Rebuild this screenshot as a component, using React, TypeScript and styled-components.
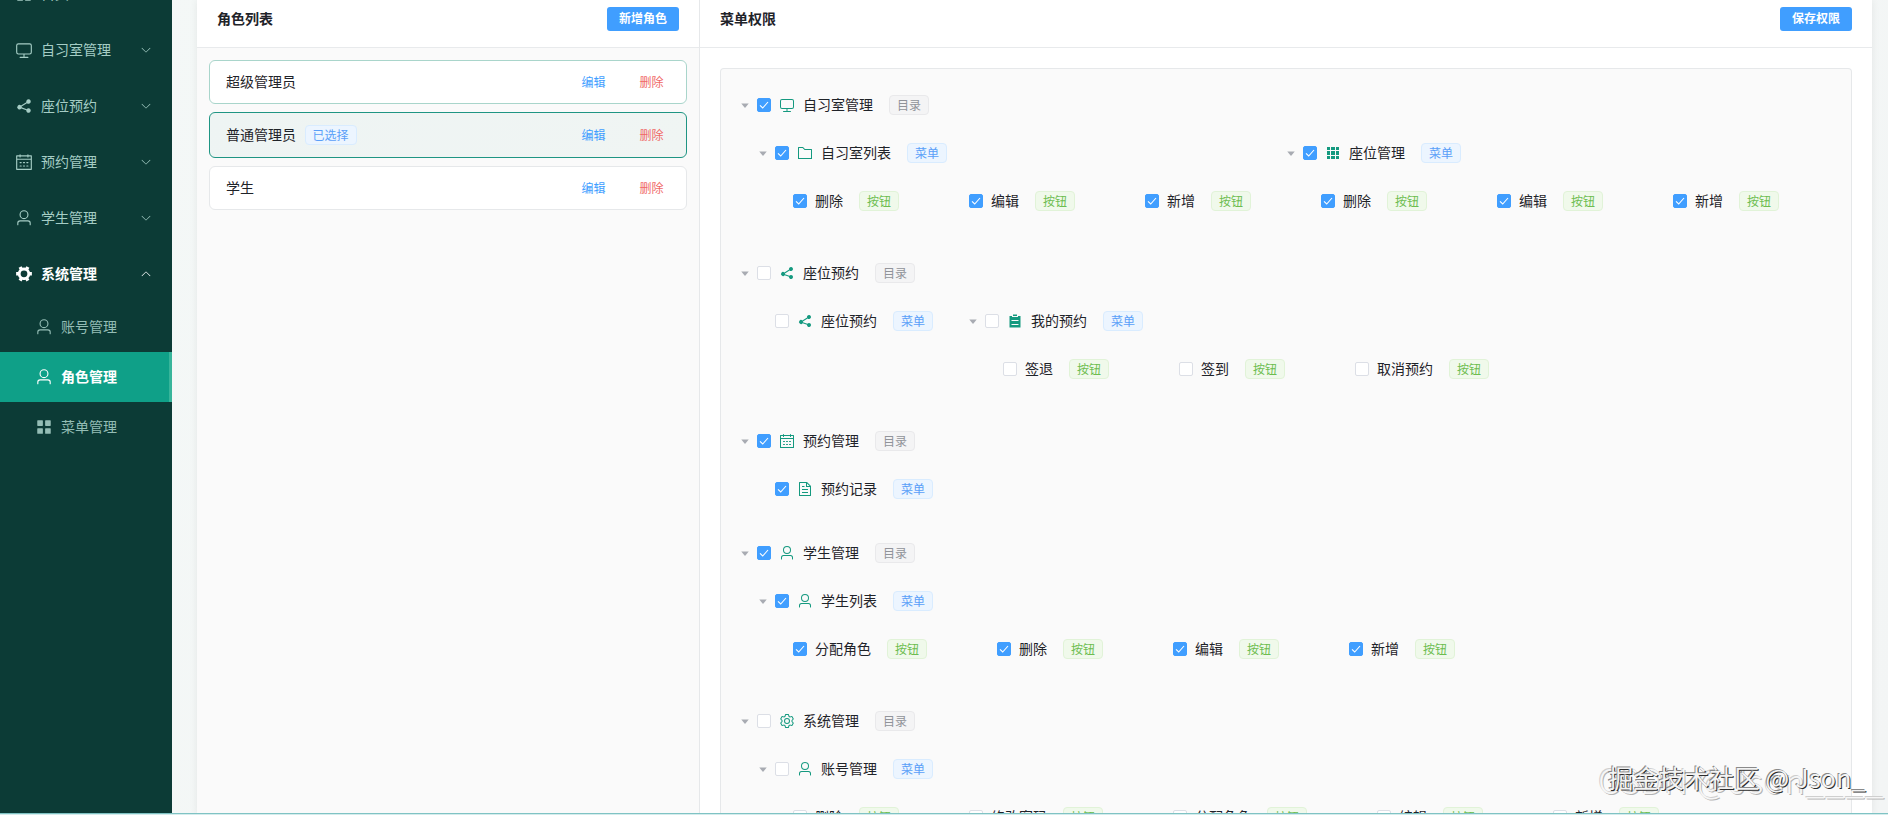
import React from "react";
import styled, { createGlobalStyle, css } from "styled-components";

const Global = createGlobalStyle`
  *, *::before, *::after { box-sizing: border-box; }
  html, body { margin: 0; height: 100%; overflow: hidden; }
  body {
    font-family: "Noto Sans CJK SC", "Noto Sans", sans-serif;
    font-size: 14px;
    color: #1f2329;
    -webkit-font-smoothing: antialiased;
  }
  #root { height: 100%; }
`;

const icons = {
  monitor:
    "M544 768v128h192a32 32 0 1 1 0 64H288a32 32 0 1 1 0-64h192V768H192A128 128 0 0 1 64 640V256a128 128 0 0 1 128-128h640a128 128 0 0 1 128 128v384a128 128 0 0 1-128 128H544zM192 192a64 64 0 0 0-64 64v384a64 64 0 0 0 64 64h640a64 64 0 0 0 64-64V256a64 64 0 0 0-64-64H192z",
  user:
    "M512 512a192 192 0 1 0 0-384 192 192 0 0 0 0 384zm0 64a256 256 0 1 1 0-512 256 256 0 0 1 0 512zm320 320v-96a96 96 0 0 0-96-96H288a96 96 0 0 0-96 96v96a32 32 0 1 1-64 0v-96a160 160 0 0 1 160-160h448a160 160 0 0 1 160 160v96a32 32 0 1 1-64 0z",
  share:
    "m679.872 348.8-301.76 188.608a127.808 127.808 0 0 1 5.12 52.16l279.936 104.96a128 128 0 1 1-22.464 59.904l-279.872-104.96a128 128 0 1 1-16.64-166.272l301.696-188.608a128 128 0 1 1 33.92 54.272z",
  calendar:
    "M128 384v512h768V192H768v32a32 32 0 1 1-64 0v-32H320v32a32 32 0 0 1-64 0v-32H128v128h768v64H128zm192-256h384V96a32 32 0 1 1 64 0v32h160a32 32 0 0 1 32 32v768a32 32 0 0 1-32 32H96a32 32 0 0 1-32-32V160a32 32 0 0 1 32-32h160V96a32 32 0 0 1 64 0v32zm-32 384h64a32 32 0 0 1 0 64h-64a32 32 0 0 1 0-64zm0 192h64a32 32 0 1 1 0 64h-64a32 32 0 1 1 0-64zm192-192h64a32 32 0 0 1 0 64h-64a32 32 0 0 1 0-64zm0 192h64a32 32 0 1 1 0 64h-64a32 32 0 1 1 0-64zm192-192h64a32 32 0 1 1 0 64h-64a32 32 0 1 1 0-64zm0 192h64a32 32 0 1 1 0 64h-64a32 32 0 1 1 0-64z",
  folder:
    "M128 192v640h768V320H485.76L357.504 192H128zm-32-64h287.872l128.384 128H928a32 32 0 0 1 32 32v576a32 32 0 0 1-32 32H96a32 32 0 0 1-32-32V160a32 32 0 0 1 32-32z",
  grid:
    "M640 384v256H384V384h256zm64 0h192v256H704V384zm-64 512H384V704h256v192zm64 0V704h192v192H704zm-64-768v192H384V128h256zm64 0h192v192H704V128zM320 384v256H128V384h192zm0 512H128V704h192v192zm0-768v192H128V128h192z",
  document:
    "M832 384H576V128H192v768h640V384zm-26.496-64L640 154.496V320h165.504zM160 64h480l256 256v608a32 32 0 0 1-32 32H160a32 32 0 0 1-32-32V96a32 32 0 0 1 32-32zm160 448h384v64H320v-64zm0-192h160v64H320v-64zm0 384h384v64H320v-64z",
  menu:
    "M160 448a32 32 0 0 1-32-32V160.064a32 32 0 0 1 32-32h256a32 32 0 0 1 32 32V416a32 32 0 0 1-32 32H160zm448 0a32 32 0 0 1-32-32V160.064a32 32 0 0 1 32-32h255.936a32 32 0 0 1 32 32V416a32 32 0 0 1-32 32H608zM160 896a32 32 0 0 1-32-32V608a32 32 0 0 1 32-32h256a32 32 0 0 1 32 32v256a32 32 0 0 1-32 32H160zm448 0a32 32 0 0 1-32-32V608a32 32 0 0 1 32-32h255.936a32 32 0 0 1 32 32v256a32 32 0 0 1-32 32H608z",
  tools:
    "M764.416 254.72a351.68 351.68 0 0 1 86.336 149.184H960v192.064H850.752a351.68 351.68 0 0 1-86.336 149.312l54.72 94.72-166.272 96-54.592-94.72a352.64 352.64 0 0 1-172.48 0L371.136 936l-166.272-96 54.72-94.72a351.68 351.68 0 0 1-86.336-149.312H64v-192h109.248a351.68 351.68 0 0 1 86.336-149.312L204.8 160l166.208-96h.192l54.656 94.592a352.64 352.64 0 0 1 172.48 0L652.8 64h.128L819.2 160l-54.72 94.72zM704 499.968a192 192 0 1 0-384 0 192 192 0 0 0 384 0z",
  setting:
    "M600.704 64a32 32 0 0 1 30.464 22.208l35.2 109.376c14.784 7.232 28.928 15.36 42.432 24.512l112.384-24.192a32 32 0 0 1 34.432 15.36L944.32 364.8a32 32 0 0 1-4.032 37.504l-77.12 85.12a357.12 357.12 0 0 1 0 49.024l77.12 85.248a32 32 0 0 1 4.032 37.504l-88.704 153.6a32 32 0 0 1-34.432 15.296L708.8 803.904c-13.44 9.088-27.648 17.28-42.368 24.512l-35.264 109.376A32 32 0 0 1 600.704 960H423.296a32 32 0 0 1-30.464-22.208L357.696 828.48a351.616 351.616 0 0 1-42.56-24.64l-112.32 24.256a32 32 0 0 1-34.432-15.36L79.68 659.2a32 32 0 0 1 4.032-37.504l77.12-85.248a357.12 357.12 0 0 1 0-48.896l-77.12-85.248A32 32 0 0 1 79.68 364.8l88.704-153.6a32 32 0 0 1 34.432-15.296l112.32 24.256c13.568-9.152 27.776-17.408 42.56-24.64l35.2-109.312A32 32 0 0 1 423.232 64H600.64zm-23.424 64H446.72l-36.352 113.088-24.512 11.968a294.113 294.113 0 0 0-34.816 20.096l-22.656 15.36-116.224-25.088-65.28 113.152 79.68 88.192-1.92 27.136a293.12 293.12 0 0 0 0 40.192l1.92 27.136-79.808 88.192 65.344 113.152 116.224-25.024 22.656 15.296a294.113 294.113 0 0 0 34.816 20.096l24.512 11.968L446.72 896h130.688l36.48-113.152 24.448-11.904a288.282 288.282 0 0 0 34.752-20.096l22.592-15.296 116.288 25.024 65.28-113.152-79.744-88.192 1.92-27.136a293.12 293.12 0 0 0 0-40.256l-1.92-27.136 79.808-88.128-65.344-113.152-116.288 24.96-22.592-15.232a287.616 287.616 0 0 0-34.752-20.096l-24.448-11.904L577.344 128zM512 320a192 192 0 1 1 0 384 192 192 0 0 1 0-384zm0 64a128 128 0 1 0 0 256 128 128 0 0 0 0-256z",
  list:
    "M704 192h160v736H160V192h160v64h384v-64zM288 512h448v-64H288v64zm0 256h448v-64H288v64zm96-576V96h256v96H384z",
  arrow:
    "M831.872 340.864 512 652.672 192.128 340.864a30.592 30.592 0 0 0-42.752 0 29.12 29.12 0 0 0 0 41.6L489.664 714.24a32 32 0 0 0 44.672 0l340.288-331.712a29.12 29.12 0 0 0 0-41.728 30.592 30.592 0 0 0-42.752 0z",
  caret: "M192 384h640L512 768z",
};
type IconName = keyof typeof icons;

const Svg = styled.svg<{ $size: number; $flip?: boolean }>`
  display: block;
  flex: none;
  width: ${(p) => p.$size}px;
  height: ${(p) => p.$size}px;
  fill: currentColor;
  ${(p) => p.$flip && css`transform: rotate(180deg);`}
`;

const Icon = ({ name, size, flip }: { name: IconName; size: number; flip?: boolean }) => (
  <Svg viewBox="0 0 1024 1024" $size={size} $flip={flip}>
    <path d={icons[name]} />
  </Svg>
);

const Page = styled.div`
  position: relative;
  display: flex;
  height: 100vh;
  overflow: hidden;
  background: linear-gradient(135deg, #f4f8f7, #f3f5f5);
`;

const Sidebar = styled.nav`
  flex: none;
  display: flex;
  flex-direction: column;
  justify-content: flex-start;
  width: 172px;
  overflow: hidden;
  background: #0c3b36;
`;

const SideList = styled.div`
  margin-top: -34px;
`;

const SideItem = styled.div<{ $open?: boolean }>`
  display: flex;
  align-items: center;
  height: 56px;
  padding: 0 20px 0 15px;
  color: ${(p) => (p.$open ? "#ffffff" : "#a5cdc5")};
  font-weight: ${(p) => (p.$open ? 600 : 400)};
`;

const SideText = styled.span`
  flex: 1;
  margin-left: 8px;
  padding-bottom: 2px;
  line-height: 20px;
  white-space: nowrap;
`;

const SubItem = styled.div<{ $active?: boolean }>`
  display: flex;
  align-items: center;
  height: 50px;
  padding-left: 35px;
  color: ${(p) => (p.$active ? "#ffffff" : "#94bdb5")};
  font-weight: ${(p) => (p.$active ? 600 : 400)};
  ${(p) =>
    p.$active &&
    css`
      background: #0fa088;
      border-right: 3px solid #38b59b;
    `}
`;

const Card = styled.main`
  flex: 1;
  display: flex;
  margin: 0 16px 0 25px;
  min-width: 0;
  background: #ffffff;
  box-shadow: 0 0 8px rgba(0, 0, 0, 0.07);
`;

const RolePanel = styled.section`
  flex: none;
  display: flex;
  flex-direction: column;
  width: 503px;
  border-right: 1px solid #e6e8ea;
  background: #fafafa;
`;

const MenuPanel = styled.section`
  flex: 1;
  display: flex;
  flex-direction: column;
  min-width: 0;
`;

const PanelHeader = styled.header`
  flex: none;
  display: flex;
  align-items: center;
  justify-content: space-between;
  height: 48px;
  padding: 0 20px 10px;
  border-bottom: 1px solid #e8eaec;
  background: #ffffff;
`;

const PanelTitle = styled.h2`
  margin: 0;
  padding-bottom: 2px;
  font-size: 14px;
  line-height: 20px;
  font-weight: 700;
`;

const PrimaryButton = styled.button`
  width: 72px;
  height: 24px;
  padding: 0 0 2px;
  border: 0;
  border-radius: 3px;
  background: #409eff;
  color: #ffffff;
  font: 700 12px/22px "Noto Sans CJK SC", sans-serif;
`;

const RoleList = styled.div`
  display: flex;
  flex-direction: column;
  gap: 8px;
  padding: 12px;
`;

const RoleCard = styled.div<{ $state?: "hover" | "selected" }>`
  display: flex;
  align-items: center;
  height: ${(p) => (p.$state === "selected" ? 46 : 44)}px;
  padding: 0 22.5px 0 16px;
  border: 1px solid
    ${(p) => (p.$state === "selected" ? "#1f9583" : p.$state === "hover" ? "#a9d5cb" : "#e6e8ea")};
  border-radius: 6px;
  background: ${(p) => (p.$state === "selected" ? "linear-gradient(135deg, #eef4f3, #f0f5f3)" : "#ffffff")};
`;

const RoleName = styled.span`
  padding-bottom: 2px;
  line-height: 20px;
`;

const Actions = styled.div`
  display: flex;
  gap: 34px;
  margin-left: auto;
  padding-bottom: 1px;
`;

const LinkButton = styled.a<{ $danger?: boolean }>`
  font-size: 12px;
  line-height: 20px;
  color: ${(p) => (p.$danger ? "#f06866" : "#409eff")};
`;

type Kind = "dir" | "menu" | "button";

const tagColors: Record<Kind, string> = {
  dir: "color: #909399; background: #f4f4f5; border-color: #e9e9eb;",
  menu: "color: #5a9ff8; background: #ecf5ff; border-color: #d9ecff;",
  button: "color: #6dbd50; background: #f0f9eb; border-color: #e1f3d8;",
};

const Tag = styled.span<{ $kind: Kind; $gap: number }>`
  flex: none;
  height: 20px;
  margin-left: ${(p) => p.$gap}px;
  padding: 0 7px;
  border: 1px solid;
  border-radius: 4px;
  font-size: 12px;
  line-height: 17px;
  ${(p) => tagColors[p.$kind]}
`;

const TreeBox = styled.div`
  flex: 1;
  min-height: 0;
  margin: 20px 20px 0;
  padding: 12px;
  overflow: hidden;
  border: 1px solid #e6e8ea;
  border-bottom: 0;
  border-radius: 4px 4px 0 0;
  background: #fafafa;
`;

const NodeBox = styled.div`
  margin-bottom: 8px;
`;

const Children = styled.div`
  display: flex;
  align-items: flex-start;
`;

const NodeRow = styled.div<{ $level: number }>`
  display: flex;
  align-items: center;
  height: 48px;
  padding: 0 10px 0 ${(p) => p.$level * 18}px;
  white-space: nowrap;
`;

const CaretSlot = styled.span`
  display: flex;
  justify-content: center;
  width: 24px;
  color: #a8abb2;
`;

const Checkbox = styled.span<{ $checked?: boolean }>`
  display: flex;
  align-items: center;
  justify-content: center;
  width: 14px;
  height: 14px;
  margin-right: 8px;
  border: 1px solid ${(p) => (p.$checked ? "#409eff" : "#dcdfe6")};
  border-radius: 2px;
  background: ${(p) => (p.$checked ? "#409eff" : "#ffffff")};
`;

const Tick = styled.svg`
  width: 12px;
  height: 12px;
  fill: none;
  stroke: #ffffff;
  stroke-width: 1.1;
`;

const NodeIcon = styled.span`
  margin-right: 8px;
  color: #14997f;
`;

const NodeLabel = styled.span`
  padding-bottom: 2px;
  line-height: 20px;
`;

const Watermark = styled.div`
  position: absolute;
  right: 22px;
  bottom: 20px;
  font-size: 25px;
  letter-spacing: 0.25px;
  line-height: 36px;
  white-space: nowrap;
  color: #f4f4f4;
  text-shadow: -1px -1px 0 #8a8a8a, 1px 1px 0 #2c2c2c;
`;

const GhostMark = styled.div`
  position: absolute;
  right: 3px;
  bottom: 11px;
  font-size: 34px;
  font-weight: 300;
  letter-spacing: 0.9px;
  line-height: 48px;
  white-space: nowrap;
  color: #f6f6f6;
  text-shadow: -1px -1px 0 #cfcfcf, 1px 1px 0 #b4b4b4;
`;

const BottomLine = styled.div`
  position: absolute;
  left: 0;
  right: 0;
  bottom: 0;
  height: 2px;
  border-top: 1px solid #7fc3c4;
  background: #d5ecec;
`;

interface TreeNode {
  label: string;
  kind: Kind;
  icon?: IconName;
  checked?: boolean;
  children?: TreeNode[];
}

const buttons = (labels: string[], checked: boolean): TreeNode[] =>
  labels.map((label) => ({ label, kind: "button", checked }));

const tree: TreeNode[] = [
  {
    label: "自习室管理", kind: "dir", icon: "monitor", checked: true,
    children: [
      { label: "自习室列表", kind: "menu", icon: "folder", checked: true, children: buttons(["删除", "编辑", "新增"], true) },
      { label: "座位管理", kind: "menu", icon: "grid", checked: true, children: buttons(["删除", "编辑", "新增"], true) },
    ],
  },
  {
    label: "座位预约", kind: "dir", icon: "share",
    children: [
      { label: "座位预约", kind: "menu", icon: "share" },
      { label: "我的预约", kind: "menu", icon: "list", children: buttons(["签退", "签到", "取消预约"], false) },
    ],
  },
  {
    label: "预约管理", kind: "dir", icon: "calendar", checked: true,
    children: [{ label: "预约记录", kind: "menu", icon: "document", checked: true }],
  },
  {
    label: "学生管理", kind: "dir", icon: "user", checked: true,
    children: [
      { label: "学生列表", kind: "menu", icon: "user", checked: true, children: buttons(["分配角色", "删除", "编辑", "新增"], true) },
    ],
  },
  {
    label: "系统管理", kind: "dir", icon: "setting",
    children: [
      { label: "账号管理", kind: "menu", icon: "user", children: buttons(["删除", "修改密码", "分配角色", "编辑", "新增"], false) },
    ],
  },
];

const tagText: Record<Kind, string> = { dir: "目录", menu: "菜单", button: "按钮" };

const Node = ({ node, level }: { node: TreeNode; level: number }) => (
  <NodeBox>
    <NodeRow $level={level}>
      <CaretSlot>{node.children && <Icon name="caret" size={12} />}</CaretSlot>
      <Checkbox $checked={node.checked}>
        {node.checked && (
          <Tick viewBox="0 0 12 12">
            <path d="M2 6.4 4.7 9 10 3" />
          </Tick>
        )}
      </Checkbox>
      {node.icon && (
        <NodeIcon>
          <Icon name={node.icon} size={16} />
        </NodeIcon>
      )}
      <NodeLabel>{node.label}</NodeLabel>
      <Tag $kind={node.kind} $gap={16}>{tagText[node.kind]}</Tag>
    </NodeRow>
    {node.children && (
      <Children>
        {node.children.map((child, i) => (
          <Node key={i} node={child} level={level + 1} />
        ))}
      </Children>
    )}
  </NodeBox>
);

const sideItems: { label: string; icon: IconName; open?: boolean }[] = [
  { label: "自习室管理", icon: "monitor" },
  { label: "座位预约", icon: "share" },
  { label: "预约管理", icon: "calendar" },
  { label: "学生管理", icon: "user" },
  { label: "系统管理", icon: "tools", open: true },
];

const subItems: { label: string; icon: IconName; active?: boolean }[] = [
  { label: "账号管理", icon: "user" },
  { label: "角色管理", icon: "user", active: true },
  { label: "菜单管理", icon: "menu" },
];

const roles: { name: string; state?: "hover" | "selected" }[] = [
  { name: "超级管理员", state: "hover" },
  { name: "普通管理员", state: "selected" },
  { name: "学生" },
];

export default function App() {
  return (
    <Page>
      <Global />
      <Sidebar>
        <SideList>
          <SideItem>
            <Icon name="menu" size={18} />
            <SideText>首页</SideText>
          </SideItem>
          {sideItems.map((item) => (
            <SideItem key={item.label} $open={item.open}>
              <Icon name={item.icon} size={18} />
              <SideText>{item.label}</SideText>
              <Icon name="arrow" size={12} flip={item.open} />
            </SideItem>
          ))}
          {subItems.map((item) => (
            <SubItem key={item.label} $active={item.active}>
              <Icon name={item.icon} size={18} />
              <SideText>{item.label}</SideText>
            </SubItem>
          ))}
        </SideList>
      </Sidebar>
      <Card>
        <RolePanel>
          <PanelHeader>
            <PanelTitle>角色列表</PanelTitle>
            <PrimaryButton>新增角色</PrimaryButton>
          </PanelHeader>
          <RoleList>
            {roles.map((role) => (
              <RoleCard key={role.name} $state={role.state}>
                <RoleName>{role.name}</RoleName>
                {role.state === "selected" && <Tag $kind="menu" $gap={8.5}>已选择</Tag>}
                <Actions>
                  <LinkButton>编辑</LinkButton>
                  <LinkButton $danger>删除</LinkButton>
                </Actions>
              </RoleCard>
            ))}
          </RoleList>
        </RolePanel>
        <MenuPanel>
          <PanelHeader>
            <PanelTitle>菜单权限</PanelTitle>
            <PrimaryButton>保存权限</PrimaryButton>
          </PanelHeader>
          <TreeBox>
            {tree.map((node) => (
              <Node key={node.label} node={node} level={0} />
            ))}
          </TreeBox>
        </MenuPanel>
      </Card>
      <GhostMark>CSDN @Json____</GhostMark>
      <Watermark>掘金技术社区 @ Json_</Watermark>
      <BottomLine />
    </Page>
  );
}
